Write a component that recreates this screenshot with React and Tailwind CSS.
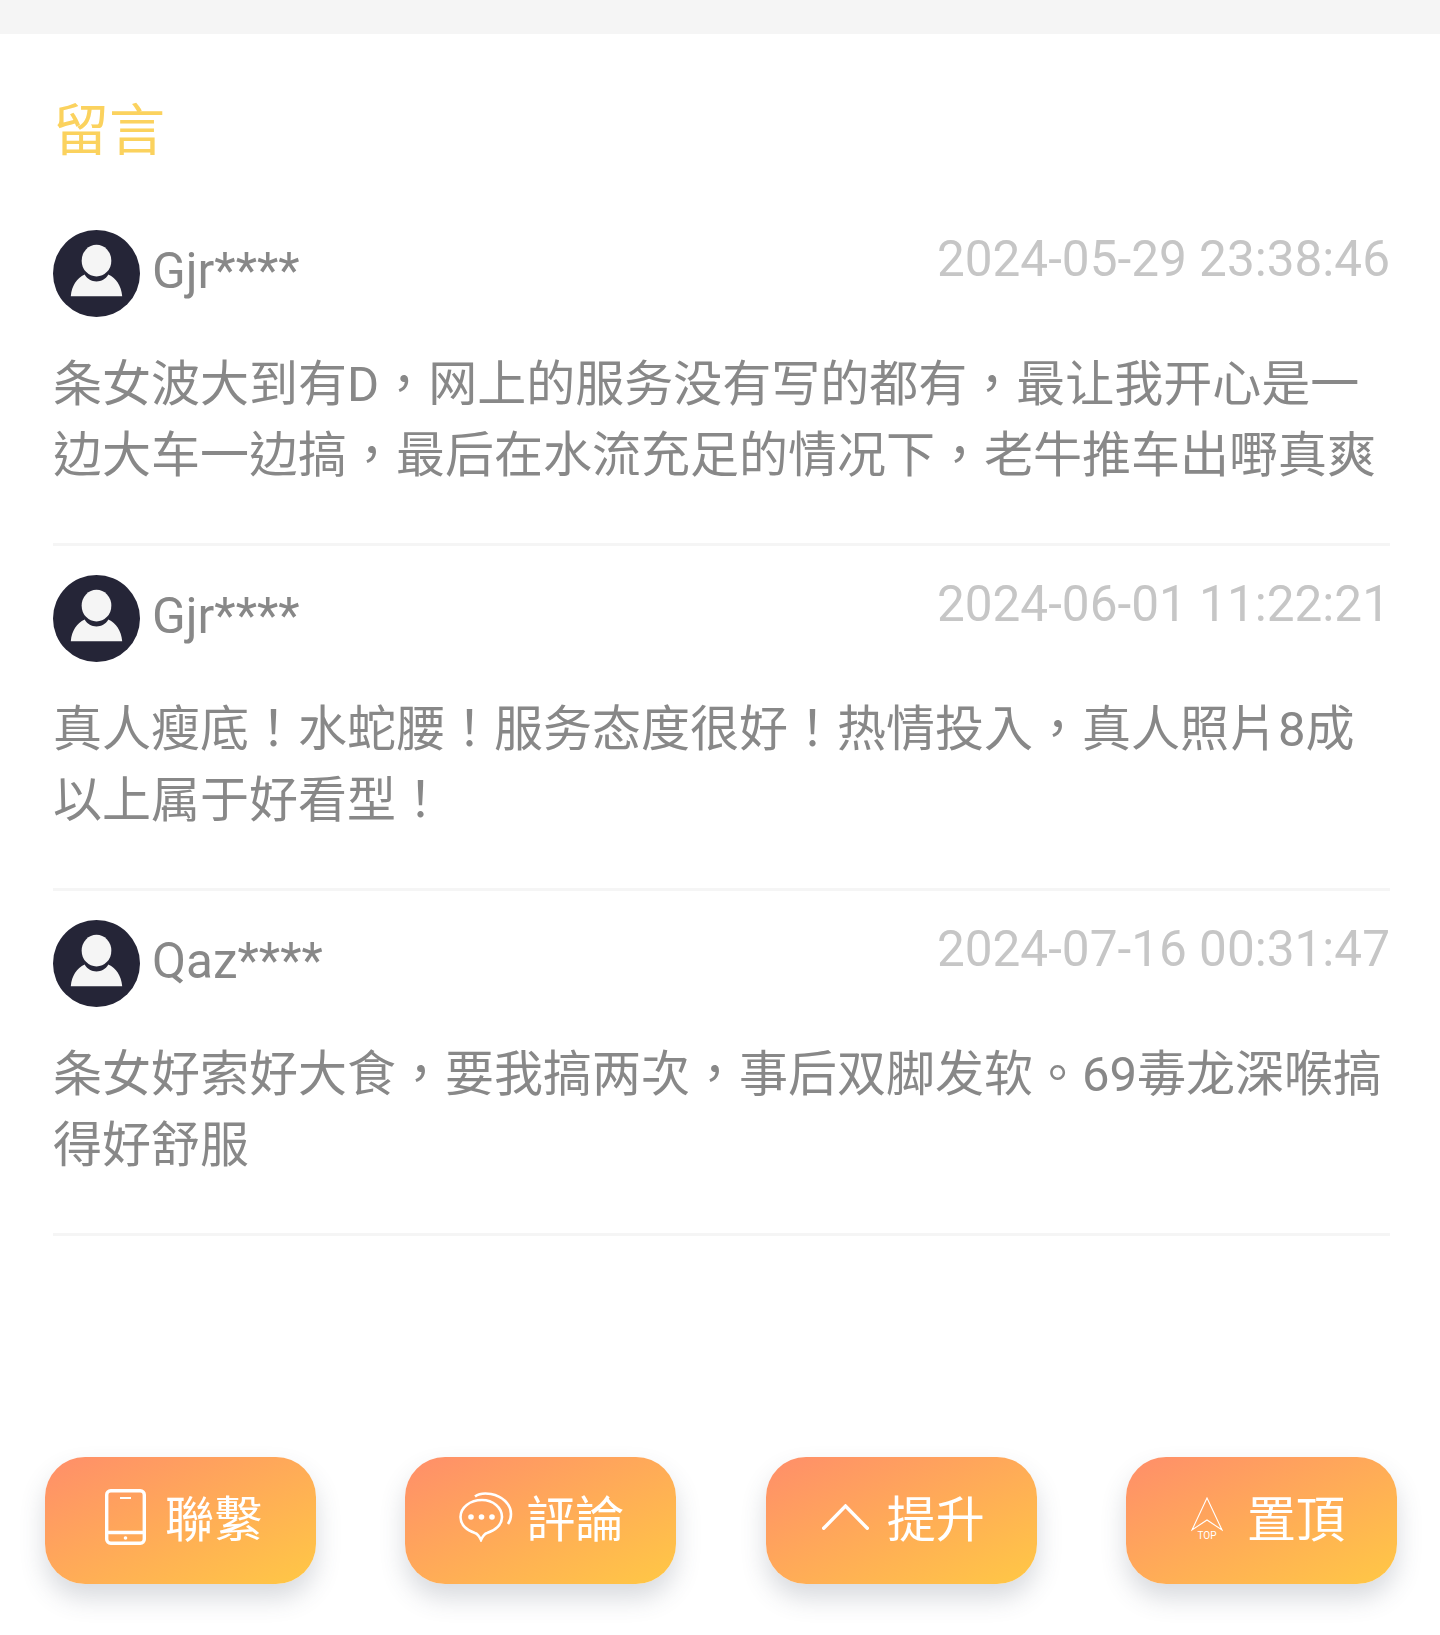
import React from 'react';

const font = "font-['Roboto','Noto_Sans_CJK_TC',sans-serif]";

const comments = [
  {
    name: 'Gjr****',
    date: '2024-05-29 23:38:46',
    text: '条女波大到有D，网上的服务没有写的都有，最让我开心是一边大车一边搞，最后在水流充足的情况下，老牛推车出嘢真爽',
  },
  {
    name: 'Gjr****',
    date: '2024-06-01 11:22:21',
    text: '真人瘦底！水蛇腰！服务态度很好！热情投入，真人照片8成以上属于好看型！',
  },
  {
    name: 'Qaz****',
    date: '2024-07-16 00:31:47',
    text: '条女好索好大食，要我搞两次，事后双脚发软。69毒龙深喉搞得好舒服',
  },
];

const Avatar = () => (
  <svg viewBox="0 0 88 88" className="w-[87px] h-[87px] shrink-0">
    <circle cx="44" cy="44" r="44" fill="#252537" />
    <ellipse cx="44" cy="31" rx="15" ry="16" fill="#f5f5f5" />
    <path d="M18 67 C19 56 24 49 32 45 C35 50 39 52 44 52 C49 52 53 50 56 45 C64 49 69 56 70 67 Z" fill="#f5f5f5" />
  </svg>
);

const PhoneIcon = () => (
  <svg viewBox="0 0 41 56" className="w-[41px] h-[56px] mb-[8px]" fill="none" stroke="white" strokeWidth="3.4">
    <rect x="1.7" y="1.7" width="37.6" height="52.6" rx="4" />
    <path d="M1.7 43.5 H39.3" />
    <path d="M15 9 H26" strokeWidth="2" />
    <circle cx="20.5" cy="49" r="1.8" fill="white" stroke="none" />
  </svg>
);

const BubbleIcon = () => (
  <svg viewBox="0 0 54 50" className="w-[54px] h-[50px] mb-[8px]" fill="none" stroke="white" strokeWidth="2.6">
    <path d="M23 8 C11 8 1.5 15.5 1.5 25 C1.5 32.5 7.5 38.5 16 41 C18 41.5 19.5 42.5 22 48 C24.5 42.5 26 41.5 28 41 C36.5 38.5 43 32.5 43 25 C43 15.5 34 8 23 8 Z" />
    <path d="M16 4.5 C20 1.5 26 1 32 2 C43 4 52 12 52 22 C52 26 51 29 49 32" />
    <circle cx="12" cy="25" r="2.8" fill="white" stroke="none" />
    <circle cx="22.5" cy="25" r="2.8" fill="white" stroke="none" />
    <circle cx="33" cy="25" r="2.8" fill="white" stroke="none" />
  </svg>
);

const ChevronIcon = () => (
  <svg viewBox="0 0 47 26" className="w-[47px] h-[26px] mb-[8px]" fill="none" stroke="white" strokeWidth="3.4" strokeLinecap="round" strokeLinejoin="miter">
    <path d="M1.7 24.3 L23.5 2 L45.3 24.3" />
  </svg>
);

const TopIcon = () => (
  <svg viewBox="0 0 32 43" className="w-[32px] h-[43px] mb-[4px]" fill="none" stroke="white" strokeWidth="1.1">
    <path d="M16 1 L31 33 L16 23 L1 33 Z" />
    <text x="16" y="42" textAnchor="middle" fontSize="10" fill="white" stroke="none" fontFamily="Roboto, sans-serif">TOP</text>
  </svg>
);

const actions = [
  { label: '聯繫', icon: <PhoneIcon />, cls: 'pl-[60px] gap-[19px]' },
  { label: '評論', icon: <BubbleIcon />, cls: 'pl-[54px] gap-[13px]' },
  { label: '提升', icon: <ChevronIcon />, cls: 'pl-[56px] gap-[18px]' },
  { label: '置頂', icon: <TopIcon />, cls: 'pl-[65px] gap-[24px]' },
];

export default function App() {
  return (
    <div lang="zh-TW" className={`w-full h-[1635px] bg-white flex flex-col ${font}`}>
      <div className="h-[34px] bg-[#f5f5f5]" />

      <div className="pl-[53px] pr-[50px] flex-1">
        <h2 className="mt-[63px] text-[56px] leading-[68px] text-[#fbd25e]">留言</h2>

        <div className="mt-[36px]">
          {comments.map((c, i) => (
            <div key={i} className="h-[345px] pt-[29px] border-b-[3px] border-[#f5f5f5]">
              <div className="flex justify-between items-start">
                <div className="flex items-center gap-[12px]">
                  <Avatar />
                  <span className="mb-[6px] text-[49.5px] leading-[56px] text-[#888888]">{c.name}</span>
                </div>
                <span className="text-[49.5px] leading-[58px] text-[#c6c6c6]">{c.date}</span>
              </div>
              <p className="mt-[32px] text-[49px] leading-[71px] text-[#888888]">{c.text}</p>
            </div>
          ))}
        </div>
      </div>

      <div className="pl-[45px] pr-[43px] pb-[51px] flex justify-between">
        {actions.map(a => (
          <button
            key={a.label}
            className={`w-[271px] h-[127px] rounded-[40px] flex items-center bg-[linear-gradient(to_bottom_right,#ff8e6a,#ffc845)] shadow-[0_14px_26px_rgba(60,70,90,0.2)] text-white text-[49px] ${a.cls}`}
          >
            {a.icon}
            <span>{a.label}</span>
          </button>
        ))}
      </div>
    </div>
  );
}
